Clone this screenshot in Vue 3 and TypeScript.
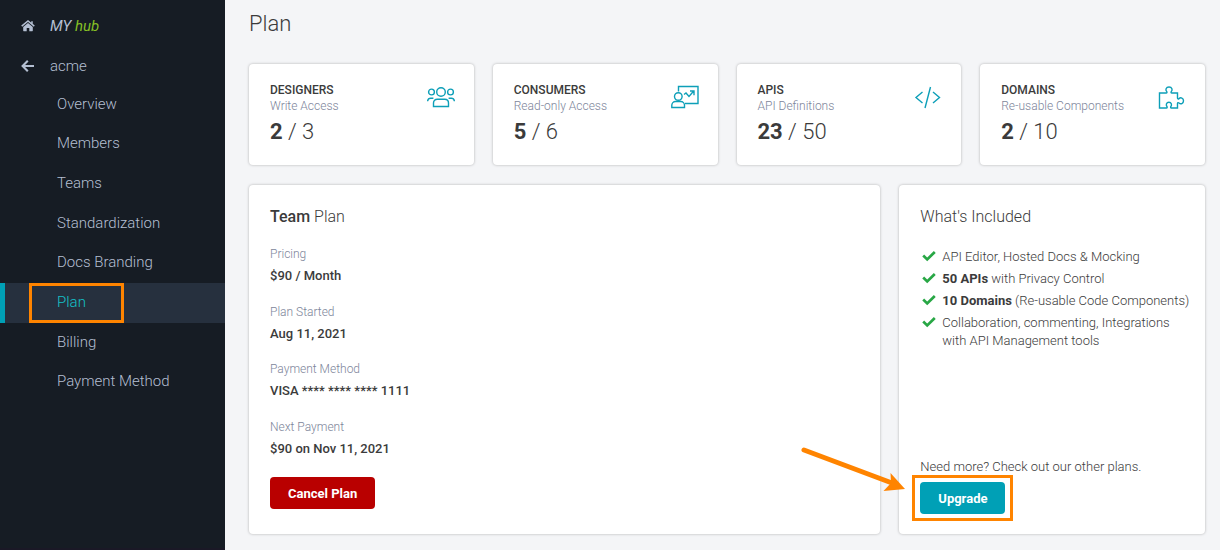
<script setup lang="ts">
interface Stat {
  title: string
  note: string
  used: number
  limit: number
  icon: 'group' | 'board' | 'code' | 'puzzle'
}

const nav: string[] = ['Overview', 'Members', 'Teams', 'Standardization', 'Docs Branding', 'Plan', 'Billing', 'Payment Method']
const active = 'Plan'

const stats: Stat[] = [
  { title: 'DESIGNERS', note: 'Write Access', used: 2, limit: 3, icon: 'group' },
  { title: 'CONSUMERS', note: 'Read-only Access', used: 5, limit: 6, icon: 'board' },
  { title: 'APIS', note: 'API Definitions', used: 23, limit: 50, icon: 'code' },
  { title: 'DOMAINS', note: 'Re-usable Components', used: 2, limit: 10, icon: 'puzzle' },
]

const details: { label: string; value: string }[] = [
  { label: 'Pricing', value: '$90 / Month' },
  { label: 'Plan Started', value: 'Aug 11, 2021' },
  { label: 'Payment Method', value: 'VISA **** **** **** 1111' },
  { label: 'Next Payment', value: '$90 on Nov 11, 2021' },
]

const features: { strong: string; text: string }[] = [
  { strong: '', text: 'API Editor, Hosted Docs & Mocking' },
  { strong: '50 APIs', text: ' with Privacy Control' },
  { strong: '10 Domains', text: ' (Re-usable Code Components)' },
  { strong: '', text: 'Collaboration, commenting, Integrations with API Management tools' },
]
</script>

<template>
  <div class="app">
    <aside class="sidebar">
      <a class="top home" href="#">
        <svg width="14" height="12" viewBox="0 0 14 12" aria-hidden="true">
          <path d="M7 2.9 2.2 6.9v3.9c0 .3.2.5.5.5h3V8h2.6v3.300h3c.3 0 .5-.2.500-.5V6.900z" fill="currentColor" />
          <path d="M.7 6.200 7 1l6.300 5.200M11 1.200v3" fill="none" stroke="currentColor" stroke-width="1.500" />
        </svg>
        <span class="brand">MY <span class="hub">hub</span></span>
      </a>
      <a class="top org" href="#">
        <svg width="14" height="12" viewBox="0 0 14 12" aria-hidden="true">
          <path d="M6.800.8 1.600 6l5.200 5.200M1.800 6H13" fill="none" stroke="currentColor" stroke-width="2.100" />
        </svg>
        <span>acme</span>
      </a>
      <nav class="menu">
        <a v-for="item in nav" :key="item" href="#" class="item" :class="{ active: item === active }">
          {{ item }}
          <span v-if="item === active" class="mark"></span>
        </a>
      </nav>
    </aside>

    <main class="main">
      <h1>Plan</h1>

      <section class="stats">
        <article v-for="s in stats" :key="s.title" class="card stat">
          <div>
            <h2>{{ s.title }}</h2>
            <p class="note">{{ s.note }}</p>
            <p class="count"><b>{{ s.used }}</b> / {{ s.limit }}</p>
          </div>
          <svg v-if="s.icon === 'group'" class="icon" viewBox="0 0 28 24">
            <circle cx="14" cy="7" r="4.300" />
            <circle cx="4.500" cy="7" r="2.900" />
            <circle cx="23.500" cy="7" r="2.900" />
            <path d="M6.500 21.500v-3.500c0-2.400 1.600-3.800 3.800-3.800h7.400c2.200 0 3.800 1.400 3.800 3.800v3.500z" />
            <path d="M.6 16.200c.2-2 1.300-3 3-3h2.800M27.400 16.200c-.2-2-1.300-3-3-3h-2.800" />
          </svg>
          <svg v-else-if="s.icon === 'board'" class="icon" viewBox="0 0 28 24">
            <path d="M7.500 6.500v-5h19.500v17H14" />
            <circle cx="7.300" cy="11.500" r="3.800" />
            <path d="M.8 22.500v-2.200c0-2.100 1.600-3.800 3.700-3.800h5.300c2.100 0 3.700 1.700 3.700 3.800v2.200z" />
            <path d="m13 9.500 2-1.500 3 3.500 4.500-5.200M19 6h4v4.200" />
          </svg>
          <svg v-else-if="s.icon === 'code'" class="icon" viewBox="0 0 28 24">
            <path d="m8.500 7-6.500 5.500L8.500 18M19 7l6.500 5.500L19 18M16.500 2l-5.500 21" />
          </svg>
          <svg v-else class="icon" viewBox="0 0 28 24">
            <path d="M1.500 8h6.600c1 0 1.100-.9.500-1.600C7.300 4.900 7.800 2 11 2s3.700 2.900 2.400 4.400c-.6.7-.5 1.600.5 1.600h5.600v5c0 1 .8 1.200 1.500.6 1.700-1.500 4.500-.7 4.500 2.200s-2.800 3.700-4.500 2.200c-.7-.6-1.500-.4-1.500.6v4.400h-6.200c-.7 0-.9-.8-.4-1.500 1.200-1.500.5-4.200-2-4.200s-3.200 2.700-2 4.200c.5.7.3 1.500-.4 1.500h-7z" />
          </svg>
        </article>
      </section>

      <section class="panels">
        <article class="card panel">
          <h3><b>Team</b> Plan</h3>
          <dl>
            <div v-for="d in details" :key="d.label">
              <dt>{{ d.label }}</dt>
              <dd>{{ d.value }}</dd>
            </div>
          </dl>
          <button type="button" class="btn cancel">Cancel Plan</button>
        </article>

        <article class="card panel">
          <h3>What's Included</h3>
          <ul>
            <li v-for="f in features" :key="f.text">
              <svg width="14" height="12" viewBox="0 0 14 12" aria-hidden="true">
                <path d="m1.200 5.600 4 3.800L12.800 2" fill="none" stroke="#28a745" stroke-width="2.700" />
              </svg>
              <span><b v-if="f.strong">{{ f.strong }}</b>{{ f.text }}</span>
            </li>
          </ul>
          <p class="more">Need more? Check out our other plans.</p>
          <div class="cta">
            <button type="button" class="btn upgrade">Upgrade</button>
            <span class="frame"></span>
            <svg class="arrow" width="106" height="48" viewBox="0 0 106 48" aria-hidden="true">
              <path d="M4 5 92 38" stroke="#ff8400" stroke-width="5" stroke-linecap="round" />
              <path d="M105 44 90.500 28 91 38 83.500 46z" fill="#ff8400" />
            </svg>
          </div>
        </article>
      </section>
    </main>
  </div>
</template>

<style>
body {
  margin: 0;
  background: #f4f5f7;
}
</style>

<style scoped>
.app {
  display: flex;
  min-height: 100vh;
  font-family: Roboto, "Liberation Sans", sans-serif;
  font-size: 13px;
  font-weight: 300;
  color: #3b3b3b;
}
h1, h2, h3, p, dl, dd, ul {
  margin: 0;
  padding: 0;
}
.sidebar {
  flex: 0 0 225px;
  box-sizing: border-box;
  border-bottom: 2px solid #1a1826;
  background: #161c24;
  color: #b4bfd2;
  font-size: 15px;
}
.top {
  display: flex;
  align-items: center;
  gap: 15px;
  padding-left: 21px;
  height: 43px;
  color: inherit;
  text-decoration: none;
}
.home {
  padding-top: 4px;
}
.org {
  height: 38px;
}
.brand {
  font-style: italic;
  font-weight: 400;
}
.hub {
  color: #85bf25;
}
.menu {
  display: grid;
  grid-template-rows: repeat(8, 1fr);
  height: 317px;
}
.item {
  position: relative;
  display: flex;
  align-items: center;
  padding: 0 0 2px 52px;
  border-left: 5px solid transparent;
  color: inherit;
  text-decoration: none;
}
.active {
  background: #26303e;
  border-left-color: #00a0b6;
  color: #14c0c8;
}
.mark {
  position: absolute;
  inset: 0 auto 0 24px;
  width: 95px;
  box-sizing: border-box;
  border: 3px solid #ff8400;
}
.main {
  flex: 1;
  min-width: 0;
  padding: 9px 15px 16px 24px;
}
h1 {
  font-size: 22px;
  line-height: 30px;
  font-weight: 300;
  margin-bottom: 25px;
}
.card {
  background: #fff;
  border-radius: 4px;
  box-shadow: 0 0 3px rgba(0, 0, 0, 0.28);
}
.stats {
  display: grid;
  grid-template-columns: repeat(4, minmax(0, 1fr));
  gap: 19px;
  margin-bottom: 20px;
}
.stat {
  display: flex;
  justify-content: space-between;
  padding: 18px 19px 15px 21px;
}
h2 {
  font-size: 12px;
  line-height: 16px;
  font-weight: 500;
}
.note, dt {
  color: #7d859a;
  font-size: 12px;
  line-height: 16px;
}
.count {
  font-size: 22px;
  line-height: 36px;
}
.icon {
  width: 28px;
  height: 24px;
  margin-top: 3px;
  fill: none;
  stroke: #0d9fb8;
  stroke-width: 1.400;
}
.panels {
  display: grid;
  grid-template-columns: minmax(0, 632fr) minmax(0, 306fr);
  gap: 19px;
}
.panel {
  display: flex;
  flex-direction: column;
  align-items: flex-start;
  padding: 20px 12px 20px 21px;
}
h3 {
  font-size: 16px;
  line-height: 24px;
  font-weight: 300;
}
h3 b, dd {
  font-weight: 500;
}
b {
  font-weight: 700;
}
dl {
  display: grid;
  grid-template-rows: repeat(4, 1fr);
  height: 230px;
  margin-top: 17px;
}
dd {
  line-height: 18px;
  margin-top: 5px;
}
.btn {
  height: 32px;
  padding: 0 18px;
  border: 0;
  border-radius: 4px;
  color: #fff;
  font: 700 13px Roboto, "Liberation Sans", sans-serif;
}
.cancel {
  margin: 1px 0 5px;
  background: #b90000;
}
.upgrade {
  background: #00a0b6;
}
ul {
  margin-top: 19px;
  list-style: none;
}
li {
  display: flex;
  gap: 6px;
  margin-bottom: 4px;
  padding-left: 2px;
  line-height: 18px;
}
li svg {
  flex: none;
  margin-top: 2px;
}
.more {
  margin-top: auto;
  line-height: 18px;
}
.cta {
  position: relative;
  margin-top: 6px;
}
.frame {
  position: absolute;
  inset: -7px -8px;
  border: 3px solid #ff8400;
}
.arrow {
  position: absolute;
  right: 99px;
  bottom: 21px;
}
</style>
